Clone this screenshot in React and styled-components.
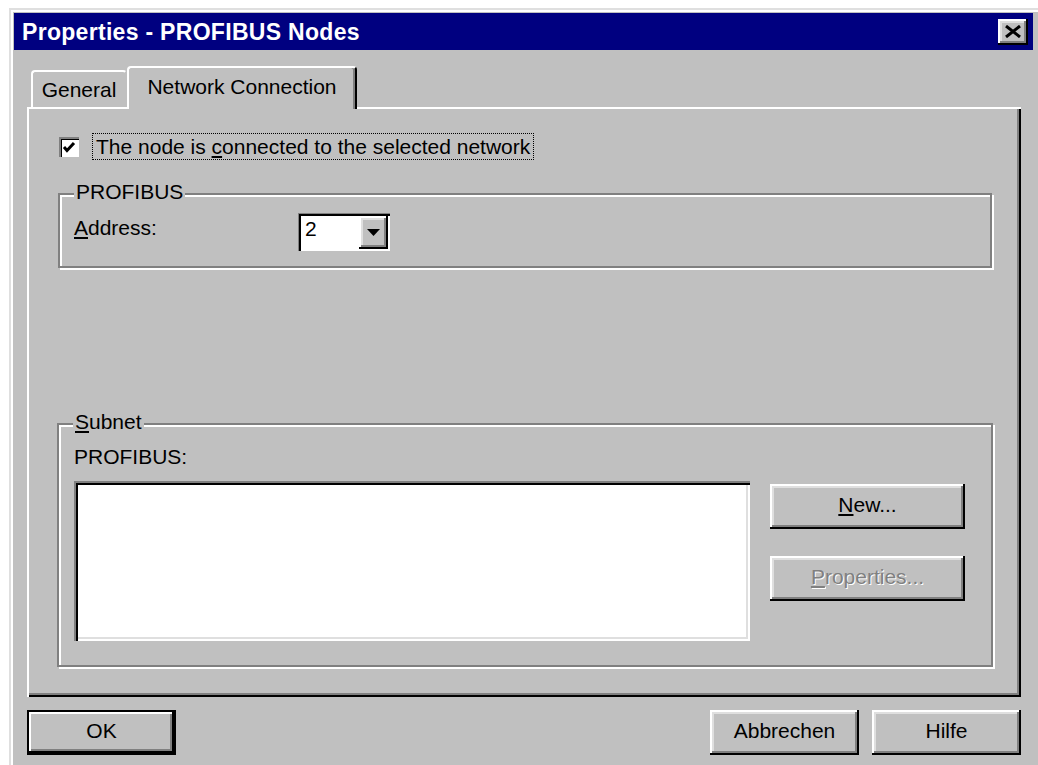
import React from 'react';
import styled, { createGlobalStyle } from 'styled-components';

const GlobalStyle = createGlobalStyle`
  html, body {
    margin: 0;
    padding: 0;
    background: #ffffff;
    overflow: hidden;
  }
  body {
    font-family: "Liberation Sans", Arial, sans-serif;
    font-size: 21px;
    color: #000;
  }
`;

const raised = `
  box-shadow: inset -2px -2px #000, inset 2px 2px #fff,
    inset -4px -4px #808080, inset 4px 4px #dfdfdf;
`;

const sunken = `
  box-shadow: inset 2px 2px #808080, inset 4px 4px #000,
    inset -2px -2px #fff, inset -4px -4px #dfdfdf;
`;

const Window = styled.div`
  margin: 8px 0 0 9px;
  width: 1036px;
  height: 770px;
  box-sizing: border-box;
  padding: 5px 12px 0 5px;
  background: #c0c0c0;
  box-shadow: inset 2px 2px #dfdfdf, inset 4px 4px #fff;
  display: flex;
  flex-direction: column;
`;

const TitleBar = styled.div`
  height: 37px;
  background: #000080;
  display: flex;
  align-items: center;
  justify-content: space-between;
  padding: 0 5px 0 8px;
  flex-shrink: 0;
`;

const Title = styled.span`
  color: #fff;
  font-weight: bold;
  font-size: 23px;
  letter-spacing: 0.3px;
  line-height: 24px;
`;

const CloseButton = styled.div`
  width: 30px;
  height: 26px;
  background: #c0c0c0;
  ${raised}
  display: flex;
  align-items: center;
  justify-content: center;
`;

const Body = styled.div`
  padding: 16px 12px 0 13px;
  display: flex;
  flex-direction: column;
`;

const TabRow = styled.div`
  height: 41px;
  display: flex;
  align-items: flex-end;
  padding-left: 4px;
  position: relative;
  z-index: 1;
`;

const Tab = styled.div`
  box-sizing: border-box;
  width: ${(p) => (p.$active ? 230 : 96)}px;
  height: ${(p) => (p.$active ? 43 : 37)}px;
  margin-bottom: ${(p) => (p.$active ? -2 : 0)}px;
  padding-top: ${(p) => (p.$active ? 7 : 6)}px;
  background: #c0c0c0;
  border-top: 2px solid #fff;
  border-left: 2px solid #fff;
  border-right: 2px solid ${(p) => (p.$active ? '#000' : 'transparent')};
  border-radius: 4px 4px 0 0;
  box-shadow: ${(p) => (p.$active ? 'inset -2px 0 #808080' : 'none')};
  text-align: center;
  line-height: 24px;
`;

const Panel = styled.div`
  box-sizing: border-box;
  width: 994px;
  height: 590px;
  border-top: 2px solid #fff;
  border-left: 2px solid #fff;
  box-shadow: inset -2px -2px #000, inset -4px -4px #808080;
  display: flex;
  flex-direction: column;
`;

const CheckRow = styled.div`
  display: flex;
  align-items: center;
  margin: 24px 0 0 30px;
`;

const CheckBox = styled.div`
  width: 20px;
  height: 20px;
  background: #fff;
  box-sizing: border-box;
  box-shadow: inset 2px 2px #808080, inset 3px 3px #000,
    inset -2px -2px #fff;
  display: flex;
  align-items: center;
  justify-content: center;
`;

const FocusLabel = styled.span`
  margin-left: 13px;
  padding: 1px 3px;
  border: 1px dotted #000;
  line-height: 23px;
`;

const Group = styled.div`
  position: relative;
  box-sizing: border-box;
  height: ${(p) => p.$height}px;
  margin: ${(p) => p.$top}px ${(p) => p.$side}px 0;
  border: 2px solid #808080;
  box-shadow: inset 2px 2px #fff, 2px 2px 0 #fff;
`;

const Legend = styled.span`
  position: absolute;
  top: -15px;
  left: 14px;
  padding: 0 2px;
  background: #c0c0c0;
  line-height: 24px;
`;

const FieldRow = styled.div`
  display: flex;
  align-items: flex-start;
  margin: 18px 0 0 14px;
`;

const FieldLabel = styled.span`
  width: 224px;
  line-height: 24px;
  padding-top: 3px;
`;

const Combo = styled.div`
  width: 92px;
  height: 38px;
  box-sizing: border-box;
  padding: 3px 2px 2px 3px;
  box-shadow: inset 1px 1px #808080, inset 3px 3px #000,
    inset -2px -2px #fff;
  background: #fff;
  display: flex;
`;

const ComboValue = styled.div`
  flex: 1;
  padding: 1px 0 0 4px;
  line-height: 24px;
`;

const ComboButton = styled.div`
  width: 29px;
  background: #c0c0c0;
  ${raised}
  display: flex;
  align-items: center;
  justify-content: center;
`;

const SubnetInner = styled.div`
  padding: 20px 24px 0 15px;
`;

const PlainLabel = styled.div`
  line-height: 24px;
`;

const SubnetRow = styled.div`
  display: flex;
  gap: 20px;
  margin-top: 12px;
`;

const ListBox = styled.div`
  width: 676px;
  height: 160px;
  background: #fff;
  ${sunken}
`;

const ButtonColumn = styled.div`
  display: flex;
  flex-direction: column;
  gap: 27px;
  padding-top: 3px;
`;

const Button = styled.button`
  width: ${(p) => p.$width}px;
  height: 45px;
  padding: 0 0 3px;
  border: none;
  background: #c0c0c0;
  font-family: inherit;
  font-size: 21px;
  color: ${(p) => (p.disabled ? '#808080' : '#000')};
  text-shadow: ${(p) => (p.disabled ? '1px 1px 0 #fff' : 'none')};
  ${(p) =>
    p.$default
      ? `box-shadow: inset 0 0 0 2px #000, inset -4px -4px #000,
          inset 4px 4px #fff, inset -6px -6px #808080;`
      : raised}
`;

const Footer = styled.div`
  display: flex;
  width: 994px;
  margin-top: 13px;
  gap: 13px;
`;

const Spacer = styled.div`
  flex: 1;
`;

const CheckMark = () => (
  <svg width="14" height="14" viewBox="0 0 14 14">
    <polyline points="2,7 5,10.5 12,3" fill="none" stroke="#000" strokeWidth="3" />
  </svg>
);

const DownArrow = () => (
  <svg width="13" height="7" viewBox="0 0 13 7">
    <polygon points="0,0 13,0 6.5,7" fill="#000" />
  </svg>
);

const CloseGlyph = () => (
  <svg width="18" height="13" viewBox="0 0 18 13">
    <path d="M2 1 L16 12 M16 1 L2 12" stroke="#000" strokeWidth="3" />
  </svg>
);

export default function App() {
  return (
    <>
      <GlobalStyle />
      <Window>
        <TitleBar>
          <Title>Properties - PROFIBUS Nodes</Title>
          <CloseButton>
            <CloseGlyph />
          </CloseButton>
        </TitleBar>
        <Body>
          <TabRow>
            <Tab>General</Tab>
            <Tab $active>Network Connection</Tab>
          </TabRow>
          <Panel>
            <CheckRow>
              <CheckBox>
                <CheckMark />
              </CheckBox>
              <FocusLabel>
                The node is <u>c</u>onnected to the selected network
              </FocusLabel>
            </CheckRow>

            <Group $height={75} $top={33} $side={29}>
              <Legend>PROFIBUS</Legend>
              <FieldRow>
                <FieldLabel>
                  <u>A</u>ddress:
                </FieldLabel>
                <Combo>
                  <ComboValue>2</ComboValue>
                  <ComboButton>
                    <DownArrow />
                  </ComboButton>
                </Combo>
              </FieldRow>
            </Group>

            <Group $height={244} $top={155} $side={28}>
              <Legend>
                <u>S</u>ubnet
              </Legend>
              <SubnetInner>
                <PlainLabel>PROFIBUS:</PlainLabel>
                <SubnetRow>
                  <ListBox />
                  <ButtonColumn>
                    <Button $width={195}>
                      <u>N</u>ew...
                    </Button>
                    <Button $width={195} disabled>
                      <u>P</u>roperties...
                    </Button>
                  </ButtonColumn>
                </SubnetRow>
              </SubnetInner>
            </Group>
          </Panel>

          <Footer>
            <Button $width={149} $default>
              OK
            </Button>
            <Spacer />
            <Button $width={149}>Abbrechen</Button>
            <Button $width={149}>Hilfe</Button>
          </Footer>
        </Body>
      </Window>
    </>
  );
}
